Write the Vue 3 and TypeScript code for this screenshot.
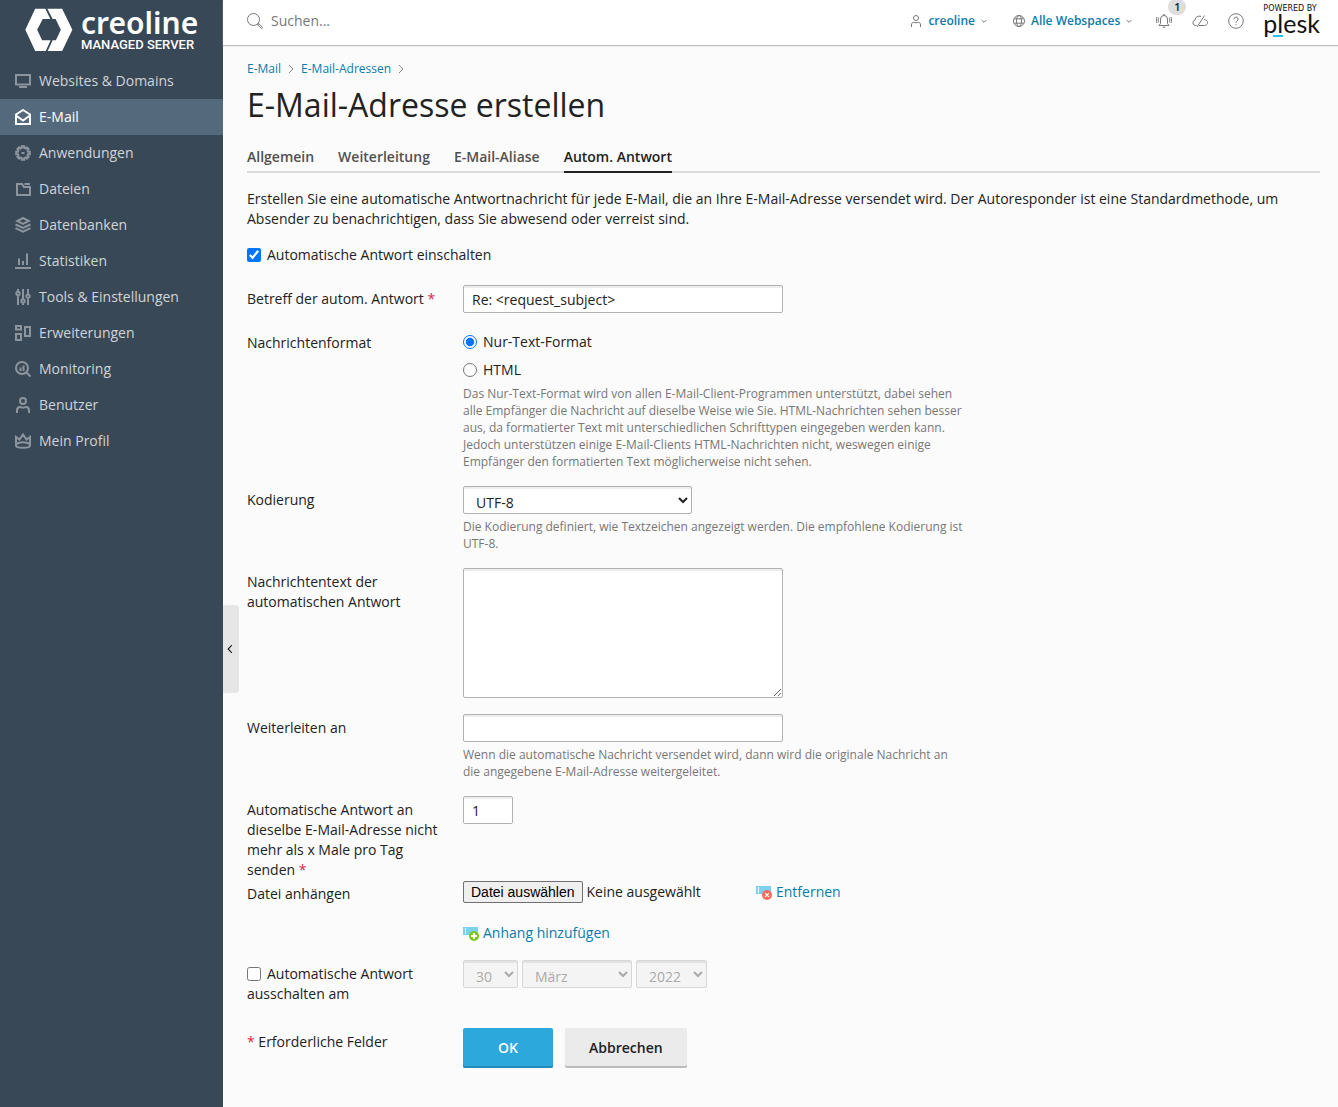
<script setup lang="ts">
import { ref } from 'vue'

interface NavItem {
  label: string
  icon: string
  active?: boolean
}

const nav: NavItem[] = [
  { label: 'Websites & Domains', icon: 'M1 2h14v9.500H1zM4 14h8' },
  { label: 'E-Mail', icon: 'M1 5.500 8 1l7 4.500V15H1zM1 6.500l7 5 7-5', active: true },
  {
    label: 'Anwendungen',
    icon: 'M6.800 1.200h2.400v1.700l1.500.6 1.200-1.100 1.700 1.700-1.100 1.200.6 1.500h1.700v2.400h-1.700l-.6 1.500 1.100 1.200-1.700 1.700-1.200-1.100-1.500.6v1.700H6.800v-1.700l-1.500-.6-1.200 1.100-1.700-1.700 1.100-1.200-.6-1.500H1.200V6.800h1.700l.6-1.500-1.100-1.200 1.700-1.700 1.200 1.100 1.500-.6zM6.500 8h3',
  },
  { label: 'Dateien', icon: 'M2 3h5l2 3h6v8H2V2M9.500 3H15' },
  { label: 'Datenbanken', icon: 'M8 1l6 3-6 3-6-3zM.5 7.500 8 11l7.500-3.500M.5 11.200 8 14.700l7.500-3.500' },
  { label: 'Statistiken', icon: 'M0 15h16M4 12V5.500M8 12V8M12 12V.5' },
  {
    label: 'Tools & Einstellungen',
    icon: 'M3 7v9M3 0v2M1.300 4.500a1.700 1.700 0 1 0 3.400 0 1.700 1.700 0 1 0-3.400 0M8 0v10M8 14v2M6.300 12a1.700 1.700 0 1 0 3.400 0 1.700 1.700 0 1 0-3.400 0M13 0v5M13 9v7M11.300 7.200a1.700 1.700 0 1 0 3.400 0 1.700 1.700 0 1 0-3.400 0',
  },
  { label: 'Erweiterungen', icon: 'M1 1h5v3.500H1zM1 9h5v6H1zM10 2h5v9h-5z' },
  {
    label: 'Monitoring',
    icon: 'M1 7a6 6 0 1 0 12 0A6 6 0 1 0 1 7M11.500 11.500l4 4M5.500 10V6.500M8.500 10V4.500',
  },
  {
    label: 'Benutzer',
    icon: 'M5 4a3 3 0 1 0 6 0 3 3 0 1 0-6 0M2 16v-2.500C2 11 3.500 10 5 10c1.200 0 1.800.7 3 .7s1.800-.7 3-.7c1.500 0 3 1 3 3.500V16',
  },
  {
    label: 'Mein Profil',
    icon: 'M1 12.500V4l3.500 2.500L8 1.500l3.500 5L15 4v8.500c0 3-14 3-14 0zM1.500 11c2.500-2.500 10.500-2.500 13 0',
  },
]

const tabs = ['Allgemein', 'Weiterleitung', 'E-Mail-Aliase', 'Autom. Antwort']
const activeTab = ref(3)

const enabled = ref(true)
const subject = ref('Re: <request_subject>')
const format = ref('text')
const encoding = ref('UTF-8')
const message = ref('')
const forwardTo = ref('')
const limit = ref('1')
const switchOff = ref(false)
const day = ref('30')
const month = ref('März')
const year = ref('2022')
</script>

<template>
  <div class="app">
    <aside class="sidebar">
      <a href="#" class="brand" aria-label="creoline">
        <svg class="brand-mark" viewBox="74 24 146 133" aria-hidden="true">
          <path d="M75 90 105 26h31l15 31h-23l-17 33 15 32h26l-15 32h-32z" />
          <path d="M142 26h45l31 64-31 64h-44l15-32h10l15-32-16-33h-9z" />
        </svg>
        <span class="brand-text">
          <span class="brand-name">creoline</span>
          <span class="brand-sub">MANAGED SERVER</span>
        </span>
      </a>
      <nav>
        <a v-for="item in nav" :key="item.label" href="#" class="nav-item" :class="{ active: item.active }">
          <svg class="nav-icon" viewBox="0 0 16 16" aria-hidden="true"><path :d="item.icon" /></svg>
          <span>{{ item.label }}</span>
        </a>
      </nav>
    </aside>

    <div class="main">
      <header class="topbar">
        <div class="search">
          <svg class="line-icon" viewBox="0 0 16 16" aria-hidden="true">
            <path d="M.5 6.500a6 6 0 1 0 12 0 6 6 0 1 0-12 0M10.800 10.800l.8.800M11.600 10.400l3.600 3.600c.8.800-.4 2-1.200 1.200l-3.600-3.600z" />
          </svg>
          <input type="search" placeholder="Suchen..." aria-label="Suchen" />
        </div>
        <a href="#" class="top-link account">
          <svg class="line-icon person" viewBox="0 0 12 14" aria-hidden="true">
            <path d="M3.500 4a2.500 2.500 0 1 0 5 0 2.500 2.500 0 1 0-5 0M1.500 13v-2c0-2 1-2.700 2.200-2.700.9 0 1.300.5 2.300.5s1.400-.5 2.300-.5c1.200 0 2.200.7 2.200 2.700v2" />
          </svg>
          <span>creoline</span>
          <svg class="line-icon caret" viewBox="0 0 6 6" aria-hidden="true"><path d="M.7 2 3 4.300 5.300 2" /></svg>
        </a>
        <a href="#" class="top-link spaces">
          <svg class="line-icon globe" viewBox="0 0 12 12" aria-hidden="true">
            <path d="M.5 6a5.500 5.500 0 1 0 11 0A5.500 5.500 0 1 0 .5 6M3.500 6a2.500 5.500 0 1 0 5 0 2.500 5.500 0 1 0-5 0M1.200 3.800h9.600M1.200 8.200h9.600" />
          </svg>
          <span>Alle Webspaces</span>
          <svg class="line-icon caret" viewBox="0 0 6 6" aria-hidden="true"><path d="M.7 2 3 4.300 5.300 2" /></svg>
        </a>
        <div class="tools">
          <button type="button" class="icon-button" aria-label="Benachrichtigungen">
            <svg class="line-icon" viewBox="0 0 16 16" aria-hidden="true">
              <path d="M3 12.500h10l-1.500-2V6a3.500 3.500 0 0 0-7 0v4.500zM7 1.800h2M6.700 14.200h2.600M2.800 4.500c-.8 1.500-.8 3.500 0 5M1 4c-.8 2-.8 4 0 6M13.200 4.500c.8 1.500.8 3.500 0 5M15 4c.8 2 .8 4 0 6" />
            </svg>
            <span class="badge">1</span>
          </button>
          <button type="button" class="icon-button" aria-label="Cloud">
            <svg class="line-icon" viewBox="0 0 16 16" aria-hidden="true">
              <path d="M4.500 12.500H3.200a2.700 2.700 0 0 1-.2-5.300c.3-3.200 3.300-4.800 6-3.700M12.300 6.500c1.800.1 3.200 1.300 3.200 3s-1.500 3-3.200 3H7M12.500 2.500 5 14" />
            </svg>
          </button>
          <button type="button" class="icon-button" aria-label="Hilfe">
            <svg class="line-icon" viewBox="0 0 16 16" aria-hidden="true">
              <path d="M.7 8a7.300 7.300 0 1 0 14.600 0A7.300 7.300 0 1 0 .7 8M5.900 6.200a2.100 2.100 0 1 1 3.300 1.700C8.300 8.500 8 8.800 8 9.800M8 11.200v1" />
            </svg>
          </button>
        </div>
        <a href="#" class="plesk">
          <span class="plesk-by">POWERED BY</span>
          <span class="plesk-name">plesk</span>
        </a>
      </header>

      <button type="button" class="collapser" aria-label="Seitenleiste einklappen">
        <svg viewBox="0 0 6 10" aria-hidden="true"><path d="M4.800 1.200 1.200 5l3.600 3.800" /></svg>
      </button>

      <main class="content">
        <nav class="crumbs" aria-label="Pfad">
          <a href="#">E-Mail</a>
          <svg viewBox="0 0 6 10" aria-hidden="true"><path d="M1 1l4 4-4 4" /></svg>
          <a href="#">E-Mail-Adressen</a>
          <svg viewBox="0 0 6 10" aria-hidden="true"><path d="M1 1l4 4-4 4" /></svg>
        </nav>
        <h1>E-Mail-Adresse erstellen</h1>
        <div class="tabs">
          <a
            v-for="(tab, i) in tabs"
            :key="tab"
            href="#"
            class="tab"
            :class="{ current: i === activeTab }"
            @click.prevent="activeTab = i"
            >{{ tab }}</a
          >
        </div>

        <form @submit.prevent>
          <p class="intro">
            Erstellen Sie eine automatische Antwortnachricht für jede E-Mail, die an Ihre E-Mail-Adresse versendet wird.
            Der Autoresponder ist eine Standardmethode, um Absender zu benachrichtigen, dass Sie abwesend oder verreist
            sind.
          </p>
          <div class="enable">
            <label class="choice"><input v-model="enabled" type="checkbox" />Automatische Antwort einschalten</label>
          </div>

          <div class="row">
            <label class="name" for="subject">Betreff der autom. Antwort <span class="req">*</span></label>
            <div class="field"><input id="subject" v-model="subject" type="text" class="box wide" /></div>
          </div>

          <div class="row" role="radiogroup" aria-labelledby="format-label">
            <span id="format-label" class="name">Nachrichtenformat</span>
            <div class="field">
              <div class="radios">
                <label class="choice"><input v-model="format" type="radio" name="format" value="text" />Nur-Text-Format</label>
                <label class="choice"><input v-model="format" type="radio" name="format" value="html" />HTML</label>
              </div>
              <p class="hint">
                Das Nur-Text-Format wird von allen E-Mail-Client-Programmen unterstützt, dabei sehen alle Empfänger die
                Nachricht auf dieselbe Weise wie Sie. HTML-Nachrichten sehen besser aus, da formatierter Text mit
                unterschiedlichen Schrifttypen eingegeben werden kann. Jedoch unterstützen einige E-Mail-Clients
                HTML-Nachrichten nicht, weswegen einige Empfänger den formatierten Text möglicherweise nicht sehen.
              </p>
            </div>
          </div>

          <div class="row">
            <label class="name" for="encoding">Kodierung</label>
            <div class="field">
              <select id="encoding" v-model="encoding" class="box encoding"><option>UTF-8</option></select>
              <p class="hint">
                Die Kodierung definiert, wie Textzeichen angezeigt werden. Die empfohlene Kodierung ist UTF-8.
              </p>
            </div>
          </div>

          <div class="row">
            <label class="name" for="message">Nachrichtentext der automatischen Antwort</label>
            <div class="field"><textarea id="message" v-model="message" class="box wide message"></textarea></div>
          </div>

          <div class="row">
            <label class="name" for="forward">Weiterleiten an</label>
            <div class="field">
              <input id="forward" v-model="forwardTo" type="text" class="box wide" />
              <p class="hint">
                Wenn die automatische Nachricht versendet wird, dann wird die originale Nachricht an die angegebene
                E-Mail-Adresse weitergeleitet.
              </p>
            </div>
          </div>

          <div class="row tight">
            <label class="name" for="limit"
              >Automatische Antwort an dieselbe E-Mail-Adresse nicht mehr als x Male pro Tag senden
              <span class="req">*</span></label
            >
            <div class="field"><input id="limit" v-model="limit" type="text" class="box short" /></div>
          </div>

          <div class="row">
            <span class="name">Datei anhängen</span>
            <div class="field attach">
              <div class="attachment">
                <div class="file">
                  <input id="file" type="file" class="file-input" />
                  <label for="file" class="file-button">Datei auswählen</label>
                  <span>Keine ausgewählt</span>
                </div>
                <a href="#" class="action">
                  <svg viewBox="0 0 16 16" aria-hidden="true">
                    <path fill="#7dcff0" d="M0 2h15v8H0z" />
                    <path fill="#fff" d="M2 3h1v6H2z" />
                    <circle cx="11" cy="11" r="5" fill="#ff6c5f" />
                    <path stroke="#fff" stroke-width="1.200" d="m9.200 9.200 3.600 3.600m0-3.600-3.600 3.600" />
                  </svg>
                  <span>Entfernen</span>
                </a>
              </div>
              <a href="#" class="action">
                <svg viewBox="0 0 16 16" aria-hidden="true">
                  <path fill="#7dcff0" d="M0 2h15v8H0z" />
                  <path fill="#fff" d="M2 3h1v6H2z" />
                  <circle cx="11" cy="11" r="5" fill="#7ac81f" />
                  <path stroke="#fff" stroke-width="2" d="M11 8v6M8 11h6" />
                </svg>
                <span>Anhang hinzufügen</span>
              </a>
            </div>
          </div>

          <div class="row last">
            <div class="name">
              <label class="choice"><input v-model="switchOff" type="checkbox" />Automatische Antwort ausschalten am</label>
            </div>
            <div class="field dates">
              <select v-model="day" class="box day" aria-label="Tag" :disabled="!switchOff"><option>30</option></select>
              <select v-model="month" class="box month" aria-label="Monat" :disabled="!switchOff"><option>März</option></select>
              <select v-model="year" class="box year" aria-label="Jahr" :disabled="!switchOff"><option>2022</option></select>
            </div>
          </div>

          <div class="row">
            <span class="name"><span class="req">*</span> Erforderliche Felder</span>
            <div class="field buttons">
              <button type="submit" class="btn primary">OK</button>
              <button type="button" class="btn">Abbrechen</button>
            </div>
          </div>
        </form>
      </main>
    </div>
  </div>
</template>

<style>
body {
  margin: 0;
  background: #fbfbfb;
}
</style>

<style scoped>
* {
  box-sizing: border-box;
}
.app {
  display: grid;
  grid-template-columns: 223px minmax(0, 1fr);
  min-height: 100vh;
  font: 14px/20px 'Open Sans', 'Noto Sans', sans-serif;
  color: #222;
}
a {
  color: #0a7cab;
  text-decoration: none;
}
svg {
  fill: none;
  flex: none;
}

/* Sidebar */
.sidebar {
  background: #394857;
}
.brand {
  display: flex;
  gap: 8px;
  height: 63px;
  padding: 8px 0 0 25px;
  color: #fff;
}
.brand-mark {
  width: 48px;
  height: 44px;
  fill: #fff;
}
.brand-text {
  display: flex;
  flex-direction: column;
}
.brand-name {
  font: 600 30px/30px 'Noto Sans', sans-serif;
}
.brand-sub {
  font: 500 13px/14px Roboto, sans-serif;
  white-space: nowrap;
}
.nav-item {
  display: flex;
  align-items: center;
  gap: 8px;
  height: 36px;
  padding: 0 15px;
  color: #d0d4d8;
}
.nav-icon {
  width: 16px;
  height: 16px;
  stroke: #8c959e;
  stroke-width: 2;
}
.nav-item.active {
  background: #546a7c;
  color: #fff;
}
.active .nav-icon {
  stroke: #fff;
}

/* Top bar */
.main {
  position: relative;
  background: #fbfbfb;
}
.topbar {
  display: flex;
  align-items: center;
  height: 45px;
  padding: 0 18px 3px 24px;
  background: #fff;
  box-shadow: 0 1px 1px #bbb;
}
.line-icon {
  width: 16px;
  height: 16px;
  stroke: #777;
}
.search {
  display: flex;
  align-items: center;
  gap: 8px;
  flex: 1;
}
.search input {
  width: 240px;
  padding: 0;
  border: 0;
  background: none;
  font: inherit;
  color: #222;
}
.search input::placeholder {
  color: #777;
}
.top-link {
  display: flex;
  align-items: center;
  gap: 6px;
  font-size: 12px;
  font-weight: 600;
}
.account {
  margin-right: 26px;
}
.spaces {
  margin-right: 24px;
}
.line-icon.person {
  width: 12px;
  height: 14px;
}
.line-icon.globe {
  width: 12px;
  height: 12px;
}
.line-icon.caret {
  width: 6px;
  height: 6px;
}
.tools {
  display: flex;
  gap: 20px;
  margin-right: 19px;
}
.icon-button {
  position: relative;
  display: flex;
  padding: 0;
  border: 0;
  background: none;
}
.badge {
  position: absolute;
  left: 12px;
  bottom: 14px;
  width: 18px;
  border-radius: 8px;
  background: #dedede;
  color: #222;
  font: 600 11px/16px 'Open Sans', sans-serif;
  text-align: center;
}
.plesk {
  display: flex;
  flex-direction: column;
  color: #111;
}
.plesk-by {
  font: 8px/8px 'DejaVu Sans', sans-serif;
}
.plesk-name {
  height: 24px;
  background: linear-gradient(#28c3ee, #28c3ee) 10px 22px / 10px 2px no-repeat;
  font: 25px/20px Lato, sans-serif;
}
.collapser {
  position: absolute;
  top: 605px;
  left: 0;
  display: flex;
  align-items: center;
  width: 16px;
  height: 88px;
  padding: 0 4px;
  border: 0;
  border-radius: 0 4px 4px 0;
  background: #e6e6e6;
}
.collapser svg {
  width: 6px;
  height: 10px;
  stroke: #222;
  stroke-width: 1.2;
}

/* Page head */
.content {
  padding: 14px 18px 22px 24px;
}
.crumbs {
  display: flex;
  align-items: center;
  gap: 7px;
  font-size: 12px;
}
.crumbs svg {
  width: 6px;
  height: 10px;
  stroke: #888;
}
h1 {
  margin: 4px 0 20px;
  font-size: 32px;
  font-weight: 400;
  line-height: 44px;
}
.tabs {
  display: flex;
  gap: 24px;
  height: 26px;
  border-bottom: 2px solid #dcdcdc;
}
.tab {
  height: 26px;
  color: #505050;
  font-weight: 600;
}
.tab.current {
  border-bottom: 2px solid #222;
  color: #222;
}

/* Form */
.intro {
  margin: 16px 0;
}
.enable {
  margin-bottom: 20px;
}
.choice input {
  width: 14px;
  height: 14px;
  margin: 0 6px 0 0;
  vertical-align: -2px;
}
.row {
  display: flex;
  gap: 16px;
  margin-bottom: 16px;
}
.row.tight {
  margin-bottom: 0;
}
.row.last {
  margin-bottom: 24px;
}
.name {
  flex: none;
  width: 200px;
  padding-top: 4px;
}
.req {
  color: #d8274c;
}
.field {
  flex: 1;
  max-width: 504px;
}
.hint {
  margin: 4px 0 0;
  color: #777;
  font-size: 12px;
  line-height: 17px;
}
.box {
  display: block;
  height: 28px;
  padding: 2px 8px;
  border: 1px solid #b2b2b2;
  border-radius: 2px;
  background: #fff;
  box-shadow: inset 0 2px #ededed;
  color: #222;
  font: inherit;
}
select.box {
  padding: 4px 8px 0;
}
.box:disabled {
  border-color: #c8c8c8;
  background: #f2f2f2;
  box-shadow: inset 0 2px #d8d8d8;
  color: #888;
  opacity: 0.7;
}
.wide {
  width: 320px;
}
.short {
  width: 50px;
}
.encoding {
  width: 229px;
}
.message {
  height: 130px;
}
.radios {
  display: flex;
  flex-direction: column;
  gap: 8px;
  padding: 3px 0 1px;
}
.attach {
  display: flex;
  flex-direction: column;
  align-items: flex-start;
  gap: 20px;
  padding: 1px 0;
}
.attachment {
  display: flex;
  align-items: center;
}
.file {
  position: relative;
  display: flex;
  align-items: center;
  gap: 4px;
  width: 293px;
}
.file-input {
  position: absolute;
  width: 120px;
  height: 22px;
  opacity: 0;
}
.file-button {
  padding: 0 7px;
  border: 1px solid #707070;
  border-radius: 2px;
  background: #efefef;
  color: #000;
  font: 14px/20px 'Liberation Sans', Arial, sans-serif;
}
.action {
  display: flex;
  align-items: center;
  gap: 4px;
}
.action svg {
  width: 16px;
  height: 16px;
}
.dates {
  display: flex;
  gap: 4px;
}
.day {
  width: 55px;
}
.month {
  width: 110px;
}
.year {
  width: 71px;
}
.buttons {
  display: flex;
  gap: 12px;
}
.btn {
  height: 40px;
  padding: 0 24px;
  border: 0;
  border-radius: 2px;
  background: #ebebeb;
  box-shadow: inset 0 -2px #bcbcbc;
  color: #222;
  font: 600 14px/20px 'Open Sans', sans-serif;
}
.btn.primary {
  width: 90px;
  background: #2ca8dd;
  box-shadow: inset 0 -2px #2489b9;
  color: #fff;
}
</style>
